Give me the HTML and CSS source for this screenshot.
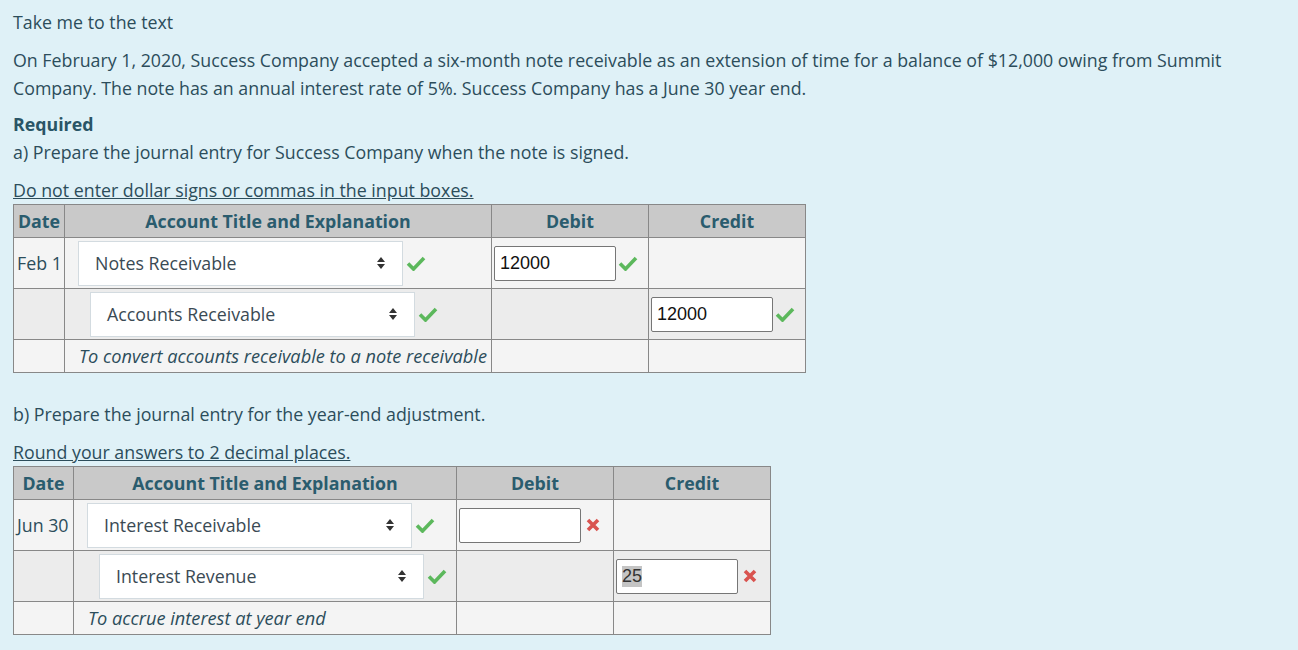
FILE: index.html
```html
<!DOCTYPE html>
<html>
<head>
<meta charset="utf-8">
<link rel="stylesheet" href="styles.css">
</head>
<body>
<div class="page">
  <p class="take">Take me to the text</p>
  <p class="intro">On February 1, 2020, Success Company accepted a six-month note receivable as an extension of time for a balance of $12,000 owing from Summit Company. The note has an annual interest rate of 5%. Success Company has a June 30 year end.</p>
  <h3 class="req">Required</h3>
  <p class="part">a) Prepare the journal entry for Success Company when the note is signed.</p>
  <p class="note note-a">Do not enter dollar signs or commas in the input boxes.</p>
  <table class="je je-a">
    <colgroup><col class="c-date"><col class="c-acct"><col class="c-amt"><col class="c-amt"></colgroup>
    <tr class="head"><th>Date</th><th>Account Title and Explanation</th><th>Debit</th><th>Credit</th></tr>
    <tr class="r1">
      <td class="date">Feb 1</td>
      <td><div class="acct"><div class="sel"><span>Notes Receivable</span><svg class="arr" viewBox="0 0 8 12" width="8" height="12"><path d="M0 5 L4 0 L8 5Z M0 7 L4 12 L8 7Z" fill="#333"/></svg></div><svg class="ok" viewBox="0 0 20 16" width="20" height="16"><path d="M2 8.5 L7.5 14 L18 3" stroke="#5cb85c" stroke-width="3.6" fill="none"/></svg></div></td>
      <td><div class="amt"><div class="inp">12000</div><svg class="ok" viewBox="0 0 20 16" width="20" height="16"><path d="M2 8.5 L7.5 14 L18 3" stroke="#5cb85c" stroke-width="3.6" fill="none"/></svg></div></td>
      <td></td>
    </tr>
    <tr class="r2">
      <td></td>
      <td><div class="acct indent"><div class="sel"><span>Accounts Receivable</span><svg class="arr" viewBox="0 0 8 12" width="8" height="12"><path d="M0 5 L4 0 L8 5Z M0 7 L4 12 L8 7Z" fill="#333"/></svg></div><svg class="ok" viewBox="0 0 20 16" width="20" height="16"><path d="M2 8.5 L7.5 14 L18 3" stroke="#5cb85c" stroke-width="3.6" fill="none"/></svg></div></td>
      <td></td>
      <td><div class="amt"><div class="inp">12000</div><svg class="ok" viewBox="0 0 20 16" width="20" height="16"><path d="M2 8.5 L7.5 14 L18 3" stroke="#5cb85c" stroke-width="3.6" fill="none"/></svg></div></td>
    </tr>
    <tr class="r3">
      <td></td>
      <td class="expl">To convert accounts receivable to a note receivable</td>
      <td></td>
      <td></td>
    </tr>
  </table>

  <p class="part part-b">b) Prepare the journal entry for the year-end adjustment.</p>
  <p class="note">Round your answers to 2 decimal places.</p>
  <table class="je je-b">
    <colgroup><col class="c-date2"><col class="c-acct2"><col class="c-amt"><col class="c-amt"></colgroup>
    <tr class="head"><th>Date</th><th>Account Title and Explanation</th><th>Debit</th><th>Credit</th></tr>
    <tr class="r1">
      <td class="date">Jun 30</td>
      <td><div class="acct"><div class="sel"><span>Interest Receivable</span><svg class="arr" viewBox="0 0 8 12" width="8" height="12"><path d="M0 5 L4 0 L8 5Z M0 7 L4 12 L8 7Z" fill="#333"/></svg></div><svg class="ok" viewBox="0 0 20 16" width="20" height="16"><path d="M2 8.5 L7.5 14 L18 3" stroke="#5cb85c" stroke-width="3.6" fill="none"/></svg></div></td>
      <td><div class="amt"><div class="inp"></div><svg class="bad" viewBox="0 0 14 14" width="14" height="14"><path d="M2 2 L12 12 M12 2 L2 12" stroke="#d9534f" stroke-width="3.6" fill="none"/></svg></div></td>
      <td></td>
    </tr>
    <tr class="r2">
      <td></td>
      <td><div class="acct indent"><div class="sel"><span>Interest Revenue</span><svg class="arr" viewBox="0 0 8 12" width="8" height="12"><path d="M0 5 L4 0 L8 5Z M0 7 L4 12 L8 7Z" fill="#333"/></svg></div><svg class="ok" viewBox="0 0 20 16" width="20" height="16"><path d="M2 8.5 L7.5 14 L18 3" stroke="#5cb85c" stroke-width="3.6" fill="none"/></svg></div></td>
      <td></td>
      <td><div class="amt"><div class="inp"><span class="hl">25</span></div><svg class="bad" viewBox="0 0 14 14" width="14" height="14"><path d="M2 2 L12 12 M12 2 L2 12" stroke="#d9534f" stroke-width="3.6" fill="none"/></svg></div></td>
    </tr>
    <tr class="r3">
      <td></td>
      <td class="expl">To accrue interest at year end</td>
      <td></td>
      <td></td>
    </tr>
  </table>
</div>
</body>
</html>
```

FILE: styles.css
```css
html, body {
  margin: 0;
  padding: 0;
  background: #dff1f7;
}
.page {
  padding: 8px 12px 0 13px;
  font-family: "Open Sans", "Noto Sans", sans-serif;
  font-size: 17.8px;
  color: #2c4d5b;
}
p { margin: 0; }
.take { line-height: 28px; margin-bottom: 10px; }
.intro { line-height: 28px; margin-bottom: 8px; }
.req {
  margin: 0;
  font-size: 17.8px;
  font-weight: 700;
  color: #2a5566;
  line-height: 28px;
}
.part { line-height: 28px; margin-bottom: 9px; }
.note {
  text-decoration: underline;
  line-height: 28px;
}
.note-a { margin-top: 10px; }
.part-b { margin-top: 27px; margin-bottom: 10px; }

table.je {
  border-collapse: collapse;
  border: 1px solid #333;
  table-layout: fixed;
}
.je-a { width: 793px; }
.je-b { width: 758px; }
.c-date { width: 51px; }
.c-acct { width: 427px; }
.c-date2 { width: 60px; }
.c-acct2 { width: 383px; }
.c-amt { width: 157px; }
.je th, .je td {
  border: 1px solid #888;
  padding: 0;
}
.je th {
  background: #c9c9c9;
  color: #2a5c6e;
  font-weight: 700;
  height: 32px;
  text-align: center;
}
.je tr.r1 td { background: #f4f4f4; height: 50px; }
.je tr.r2 td { background: #ececec; height: 50px; }
.je tr.r3 td { background: #f4f4f4; height: 32px; }
.je td.date { padding-left: 3px; }
.je td.expl {
  font-style: italic;
  font-size: 18.2px;
  padding-left: 14px;
  white-space: nowrap;
}
.acct {
  display: flex;
  align-items: center;
  gap: 3px;
  padding-left: 13px;
}
.acct.indent { padding-left: 25px; }
.sel {
  width: 325px;
  height: 45px;
  box-sizing: border-box;
  background: #fff;
  border: 1px solid #d3dbe0;
  display: flex;
  align-items: center;
  justify-content: space-between;
  padding: 0 17px 0 16px;
  color: #3a4a54;
}
.ok { display: block; margin-left: 0; }
.amt {
  display: flex;
  align-items: center;
  padding-left: 2px;
  gap: 2px;
}
.inp {
  width: 122px;
  height: 35px;
  box-sizing: border-box;
  background: #fff;
  border: 1px solid #767676;
  border-radius: 2px;
  display: flex;
  align-items: center;
  padding-left: 5px;
  font-family: "Liberation Sans", Arial, sans-serif;
  font-size: 18px;
  color: #111;
}
.hl { background: #c4c4c4; color: #333; }
.bad { display: block; margin-left: 3px; }
```
